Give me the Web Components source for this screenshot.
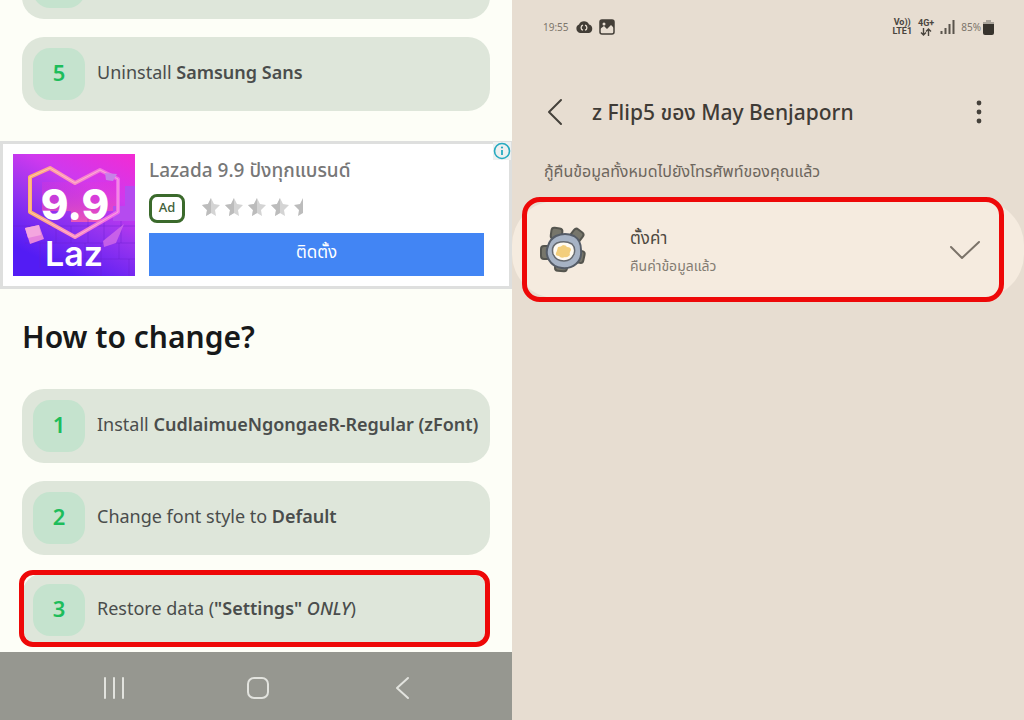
<!DOCTYPE html>
<html lang="en">
<head>
<meta charset="utf-8">
<meta name="viewport" content="width=device-width, initial-scale=1">
<title>Font change guide</title>
<style>
body { margin: 0; font-family: "Noto Sans", "Noto Sans Thai", "Open Sans", sans-serif; }
</style>
</head>
<body>
<split-view>
  <guide-screen slot="left">
    <step-card></step-card>
    <step-card number="5">Uninstall <b>Samsung Sans</b></step-card>
    <ad-banner></ad-banner>
    <section-title>How to change?</section-title>
    <step-card number="1">Install <b>CudlaimueNgongaeR-Regular (zFont)</b></step-card>
    <step-card number="2">Change font style to <b>Default</b></step-card>
    <step-card number="3" marked>Restore data (<b>"Settings"</b> <em>ONLY</em>)</step-card>
    <nav-bar slot="nav"></nav-bar>
  </guide-screen>
  <restore-screen slot="right">
    <status-bar></status-bar>
    <app-header>z Flip5 ของ May Benjaporn</app-header>
    <status-note>กู้คืนข้อมูลทั้งหมดไปยังโทรศัพท์ของคุณแล้ว</status-note>
    <restore-item><span slot="name">ตั้งค่า</span><span slot="state">คืนค่าข้อมูลแล้ว</span></restore-item>
  </restore-screen>
</split-view>
<script>
const define = (name, html) => customElements.define(name, class extends HTMLElement {
  constructor() {
    super();
    this.attachShadow({ mode: 'open' }).innerHTML = html;
  }
  connectedCallback() {
    const n = this.shadowRoot.querySelector('.number');
    if (n) n.textContent = this.getAttribute('number') || '';
  }
});

define('split-view', `
<style>
:host { display: grid; grid-template-columns: 1fr 1fr; height: 100vh; overflow: hidden; }
::slotted(*) { min-width: 0; min-height: 0; }
</style>
<slot name="left"></slot><slot name="right"></slot>`);

define('guide-screen', `
<style>
:host { display: flex; flex-direction: column; background: #fdfef7; }
main { flex: 1; min-height: 0; overflow: hidden; display: flex; flex-direction: column; justify-content: flex-end; gap: 18px; padding-bottom: 5px; }
::slotted(*) { flex-shrink: 0; }
</style>
<main><slot></slot></main><slot name="nav"></slot>`);

define('step-card', `
<style>
:host { display: flex; align-items: center; gap: 12px; position: relative; margin: 0 22px; padding: 11px; border-radius: 22px; background: #dee6da; color: #4a4d4c; font-size: 18px; line-height: 24px; white-space: nowrap; }
::slotted(b) { font-weight: 600; }
::slotted(em) { font-weight: 500; }
.number { display: grid; place-items: center; width: 52px; height: 52px; flex: none; padding-bottom: 4px; box-sizing: border-box; border-radius: 17px; background: #c5e3ce; color: #1dbd5b; font-size: 22px; font-weight: 600; }
.label { padding-bottom: 4px; }
:host([marked])::after { content: ""; position: absolute; inset: -3px 0 0 -3px; border: 5px solid #ee0808; border-radius: 14px; }
</style>
<span class="number"></span><span class="label"><slot></slot></span>`);

define('section-title', `
<style>
:host { display: block; padding: 10px 22px 14px; color: #17191a; }
h2 { margin: 0; font-size: 30px; line-height: 40px; font-weight: 600; }
</style>
<h2><slot></slot></h2>`);

const star = 'M10 1l3 6 6 1-5 5 1 6-5-3-5 3 1-6-5-5 6-1z';
const starHalf = 'M10 1v15l-5 3 1-6-5-5 6-1z';
const stars = [0, 1, 2, 3].map(i => `<path transform="translate(${i * 23})" fill="#d4d4d4" d="${star}"/><path transform="translate(${i * 23})" fill="#bcbcbc" d="${starHalf}"/>`).join('');

define('ad-banner', `
<style>
:host { display: flex; gap: 14px; position: relative; margin-top: 12px; padding: 10px 25px 10px 10px; border: 3px solid #dedfde; background: #fff; color: #777; }
.art { display: block; width: 122px; height: 122px; flex: none; }
.body { flex: 1; min-width: 0; display: flex; flex-direction: column; justify-content: space-between; }
.title { font-size: 19px; line-height: 32px; font-weight: 500; white-space: nowrap; }
.meta { display: flex; align-items: center; gap: 16px; padding-bottom: 2px; }
.tag { box-sizing: border-box; width: 36px; height: 29px; border: 3px solid #3b6a2c; border-radius: 8px; color: #41613a; font-size: 13px; line-height: 20px; text-align: center; font-weight: 500; }
.stars { display: block; width: 112px; height: 20px; margin-bottom: 4px; }
button { width: 100%; height: 43px; border: 0; padding: 0 0 4px; background: #4285f4; color: #fff; font: inherit; font-size: 17px; }
a { position: absolute; top: -2px; right: -2px; display: block; width: 18px; height: 18px; background: #eef0f0; }
a svg { display: block; }
</style>
<svg class="art" viewBox="0 0 122 122" role="img" aria-label="Lazada 9.9">
  <defs>
    <linearGradient id="bg" x1="1" y1="0" x2="0.5" y2="1"><stop offset="0" stop-color="#f32bd3"/><stop offset=".35" stop-color="#cf39ee"/><stop offset=".6" stop-color="#9a35ef"/><stop offset="1" stop-color="#531cf4"/></linearGradient>
    <linearGradient id="ht"><stop offset="0" stop-color="#ffb06b"/><stop offset=".4" stop-color="#ff94bb"/><stop offset="1" stop-color="#ee65ee"/></linearGradient>
    <linearGradient id="glow" x1="0" y1="0" x2="0" y2="1"><stop offset="0" stop-color="#ee32ce" stop-opacity=".2"/><stop offset="1" stop-color="#ff5faa" stop-opacity=".8"/></linearGradient>
  </defs>
  <path fill="url(#bg)" d="M0 0h122v122H0z"/>
  <path fill="url(#glow)" d="M29 28h76v29H88v11H58V57H29z"/>
  <path d="M112 32h10v35h-22V52h12z" fill="#b54bef"/>
  <g fill="none" stroke="#6a21cd" stroke-opacity=".4"><path d="M0 72h27M35 72h87M12 89h110M40 105h82M43 72v17M58 72v17M75 65v24M91 57v32M108 67v22M27 89v25M72 89v16M88 89v33M106 89v16M116 105v17"/></g>
  <g fill="none" stroke-linejoin="round"><path d="M17 23L37 14l25 15 25-13 18 9v33L62 83 17 58z" stroke="url(#ht)" stroke-width="4"/>
  <path d="M17 23L37 14l25 15 25-13 18 9v33L62 83 17 58z" stroke="#ffd6cf" stroke-opacity=".6"/></g>
  <path d="M12 74l14-3 5 14-14 5z" fill="#e684dc"/><path d="M12 74l14-3 2 10-13 3z" fill="#f4a6df"/>
  <path d="M90 87l21-17-8 19-12 4z" fill="#d36be7" fill-opacity=".8"/><path d="M92 19l12 1-4 7-7-1z" fill="#c782e7"/>
  <g fill="#fff" text-anchor="middle"><text x="62" y="66" font-family="Inter, sans-serif" font-weight="800" font-size="42">9.9</text>
  <text x="61" y="112" font-family="Inter, sans-serif" font-weight="600" font-size="34">Laz</text></g>
</svg>
<div class="body">
  <div class="title">Lazada 9.9 ปังทุกแบรนด์</div>
  <div class="meta"><span class="tag">Ad</span><svg class="stars" viewBox="0 0 112 20" role="img" aria-label="4.5 stars">${stars}<path transform="translate(92)" fill="#bcbcbc" d="${starHalf}"/></svg></div>
  <button type="button">ติดตั้ง</button>
</div>
<a href="#ad-info" aria-label="Ad information"><svg width="18" height="18" viewBox="0 0 18 18"><circle cx="9" cy="9" r="7.5" fill="none" stroke="#26aac0" stroke-width="1.6"/><circle cx="9" cy="5.5" r="1.1" fill="#26aac0"/><path d="M9 8v5" stroke="#26aac0" stroke-width="1.8"/></svg></a>`);

define('nav-bar', `
<style>
:host { display: block; background: #969790; }
nav { display: flex; justify-content: space-between; padding: 16px 86px 16px 90px; height: 68px; box-sizing: border-box; }
button { width: 48px; height: 40px; padding: 0; border: 0; background: none; display: grid; place-items: center; }
svg { fill: none; stroke: #e2e3de; stroke-width: 2; stroke-linecap: round; stroke-linejoin: round; }
</style>
<nav aria-label="System">
<button type="button" aria-label="Recent apps"><svg width="24" height="24"><path d="M3 2v20M12 2v20M21 2v20"/></svg></button>
<button type="button" aria-label="Home"><svg width="24" height="24"><rect x="2" y="2" width="20" height="20" rx="6"/></svg></button>
<button type="button" aria-label="Back"><svg width="24" height="24"><path d="M18 2L7 12l11 10"/></svg></button>
</nav>`);

define('restore-screen', `
<style>:host { display: flex; flex-direction: column; background: #e7ddd1; }</style><slot></slot>`);

define('status-bar', `
<style>
:host { display: flex; align-items: center; gap: 6px; height: 54px; padding: 0 30px 0 31px; color: #7c756b; font-size: 10px; line-height: 12px; }
.grow { flex: 1; }
.net { font-family: Roboto, sans-serif; font-size: 9px; line-height: 9px; font-weight: 700; color: #4a453e; text-align: center; }
svg { display: block; }
.batt { display: flex; align-items: center; gap: 2px; }
</style>
<span>19:55</span>
<svg width="18" height="14" viewBox="0 0 18 14"><path d="M5 13a4.500 4.500 0 0 1-1-8.500 5.500 5.500 0 0 1 10 0A4.400 4.400 0 0 1 14 13z" fill="#433e37"/><path d="M8 5.200a2.600 2.600 0 0 0 0 5M10 10.200a2.600 2.600 0 0 0 0-5" fill="none" stroke="#e7ddd1" stroke-width="1.300"/></svg>
<svg width="16" height="16" viewBox="0 0 16 16"><rect x="1" y="1" width="14" height="14" rx="2" fill="#e7ddd1" stroke="#433e37" stroke-width="1.500"/><path d="M1 3q0-2 2-2h10q2 0 2 2v6l-3-3-4 4-3-3-4 3z" fill="#433e37"/><circle cx="5" cy="5" r="1.500" fill="#e7ddd1"/></svg>
<span class="grow"></span>
<span class="net">Vo))<br>LTE1</span>
<span class="net">4G+<br><svg width="12" height="8" viewBox="0 0 12 8" style="margin:auto"><path d="M3.500 0v7M1 4.500L3.500 7 6 4.500M8.500 8V1M6 3.500L8.500 1 11 3.500" fill="none" stroke="#4a453e" stroke-width="1.400"/></svg></span>
<svg width="15" height="14" viewBox="0 0 15 14"><path d="M1.500 11v3M5.500 8v6M9.500 4v10M13.500 0v14" stroke="#5a544c" stroke-width="2"/></svg>
<span class="batt"><span>85%</span>
<svg width="11" height="15" viewBox="0 0 11 15"><path d="M3 0h5v2h3v4H0V2h3z" fill="#aba59c"/><path d="M0 4h11v9q0 2-2 2H2q-2 0-2-2z" fill="#37332d"/></svg></span>`);

define('app-header', `
<style>
:host { display: flex; align-items: center; height: 48px; margin-top: 34px; padding: 0 22px 0 20px; color: #3f3b36; }
button { width: 46px; height: 40px; padding: 0; border: 0; background: none; display: grid; place-items: center; flex: none; }
h1 { flex: 1; margin: 0 0 0 14px; font-size: 21px; line-height: 32px; font-weight: 500; white-space: nowrap; }
</style>
<button type="button" aria-label="Back"><svg width="18" height="28" viewBox="0 0 18 28"><path d="M15 2L3 14l12 12" fill="none" stroke="#45413b" stroke-width="2" stroke-linecap="round" stroke-linejoin="round"/></svg></button>
<h1><slot></slot></h1>
<button type="button" aria-label="More options"><svg width="6" height="24" viewBox="0 0 6 24" fill="#45413b"><circle cx="3" cy="3" r="2.400"/><circle cx="3" cy="12" r="2.400"/><circle cx="3" cy="21" r="2.400"/></svg></button>`);

define('status-note', `
<style>
:host { display: block; padding: 23px 32px 18px; color: #6d665d; font-size: 16px; line-height: 24px; white-space: nowrap; }
</style>
<slot></slot>`);

define('restore-item', `
<style>
:host { display: flex; align-items: center; position: relative; height: 97px; box-sizing: border-box; padding: 0 42px 0 27px; border-radius: 44px; background: #f5ebdf; }
:host::after { content: ""; position: absolute; inset: -4px 20px -4px 10px; border: 5px solid #ee0808; border-radius: 18px; }
.text { flex: 1; margin-left: 43px; padding-top: 4px; display: flex; flex-direction: column; color: #4e4941; font-size: 17px; line-height: 28px; white-space: nowrap; }
.state { color: #837c72; font-size: 14px; }
svg { flex: none; }
</style>
<svg width="48" height="48" viewBox="0 0 48 48" aria-hidden="true">
<g fill="#77766b" stroke="#55554f" stroke-width="2"><rect x="12" y="2" width="11" height="11" rx="3" transform="rotate(8 17 8)"/><rect x="32" y="4" width="11" height="11" rx="3" transform="rotate(38 38 10)"/><rect x="2" y="20" width="9" height="13" rx="3"/><rect x="36" y="25" width="9" height="12" rx="3" transform="rotate(12 42 31)"/><rect x="16" y="36" width="12" height="9" rx="3" transform="rotate(5 22 42)"/></g>
<path d="M17 10q9-4 18 0 7 4 7 14 1 9-5 14-6 5-14 4-9-1-13-8-4-7-1-14 2-7 8-10z" fill="#a7b3c5" stroke="#555c67" stroke-width="2"/>
<path d="M18 17q8-3 15 1 4 4 2 10-3 7-10 7-8 0-11-7-2-8 4-11z" fill="#fffaf0" stroke="#666a70" stroke-width="1.500"/>
<path d="M19 21q3 0 5-2 3 0 4 2 4 0 4 3-2 3-1 5-3 3-5 2-4 2-6-1-4 0-3-3 1-2 2-6z" fill="#f3ce7c"/>
</svg>
<div class="text"><slot name="name"></slot><span class="state"><slot name="state"></slot></span></div>
<svg width="34" height="22" viewBox="0 0 34 22" role="img" aria-label="Restored"><path d="M3 8l11 11L31 3" fill="none" stroke="#7b7369" stroke-width="2" stroke-linecap="round" stroke-linejoin="round"/></svg>`);
</script>
</body>
</html>
